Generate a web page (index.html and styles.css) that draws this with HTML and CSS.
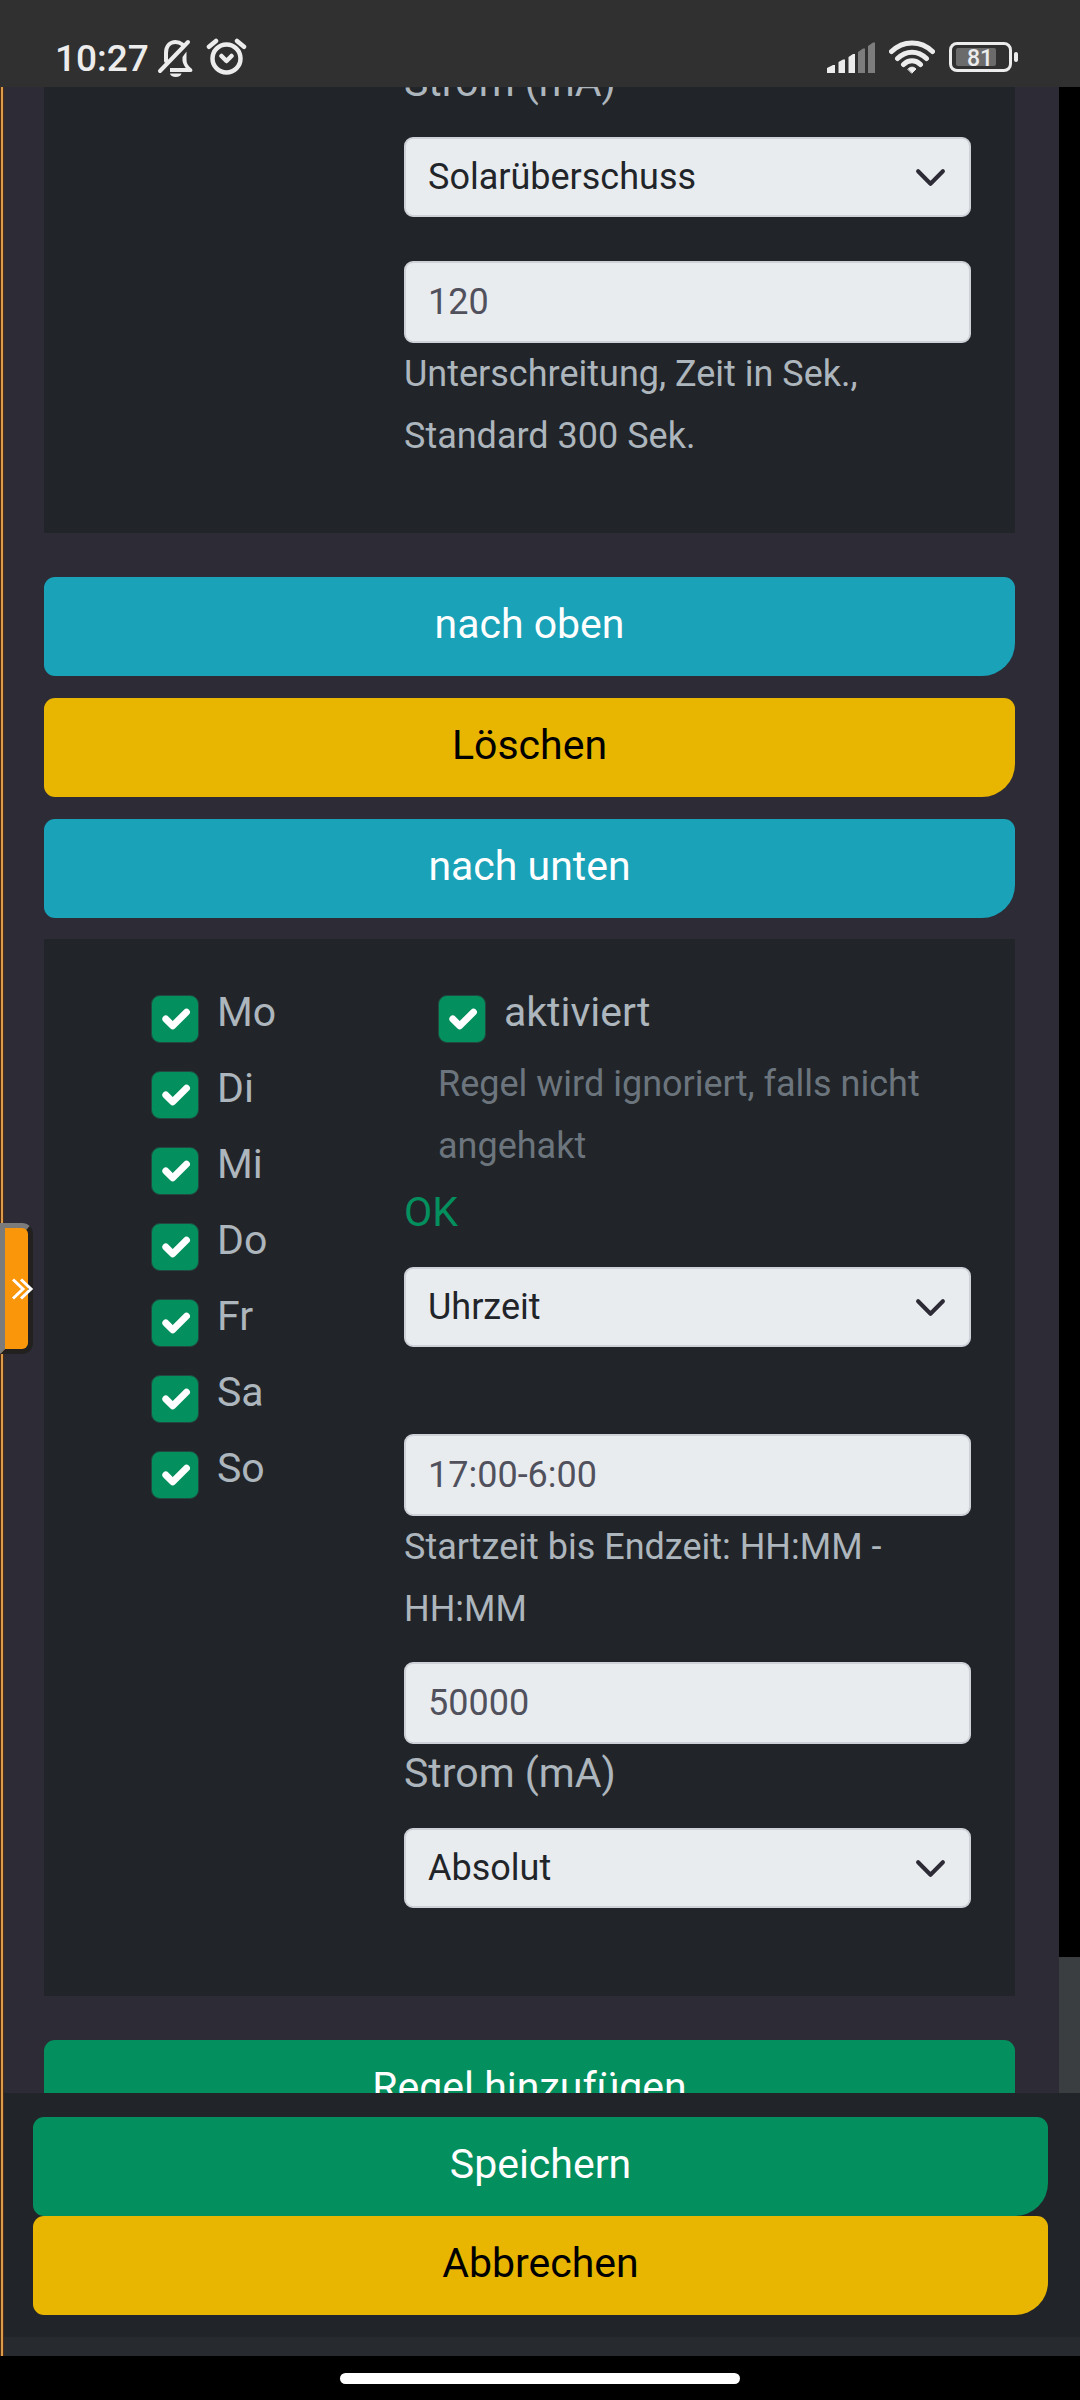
FILE: index.html
```html
<!DOCTYPE html>
<html lang="de">
<head>
<meta charset="utf-8">
<meta name="viewport" content="width=device-width, initial-scale=1">
<title>Regeln</title>
<link rel="stylesheet" href="styles.css">
</head>
<body>
<header class="status">
  <div class="status-group status-left">
    <span class="clock">10:27</span>
    <svg width="38" height="40" viewBox="0 0 38 40" fill="none" stroke="#ececec" stroke-width="4" stroke-linecap="round" aria-hidden="true">
      <path d="M9 23V15C9 8 13 4 18.500 4C21.500 4 23.500 5 25.500 6.500"/>
      <path d="M3 33L31 4"/>
      <path d="M13 32H33.500" stroke-linecap="butt"/>
      <path d="M25.500 19L29.500 13.500V22C29.500 26 31.500 28 34.500 30.500C36.500 32.500 35 34 33.500 34L31 33C28 29 26 26 25.500 23Z" fill="#ececec" stroke="none"/>
      <path d="M13 35.500H24.500A5.800 4 0 0 1 13 35.500Z" fill="#ececec" stroke="none"/>
    </svg>
    <svg class="alarm" width="41" height="40" viewBox="0 0 41 40" fill="none" stroke="#ececec" stroke-width="4.500" stroke-linecap="round" stroke-linejoin="round" aria-hidden="true">
      <circle cx="20.500" cy="20.500" r="14"/>
      <path d="M3 8.800L10 3M38 8.800L31 3M15.500 18L20.500 23L25.500 18"/>
    </svg>
  </div>
  <div class="status-group status-right">
    <svg width="48" height="40" viewBox="0 0 48 40" fill="#ececec" aria-hidden="true">
      <path d="M0 30L6 27H8V35H0ZM11.500 24L16 21.500H18V35H11.500ZM21.500 19L26 16H28V35H21.500Z"/>
      <path d="M31 14L36 10.500H38V35H31ZM41 8L46 4.500H48V35H41Z" fill="#7d7d7d"/>
    </svg>
    <svg width="46" height="40" viewBox="0 0 46 40" fill="none" stroke="#ececec" stroke-width="5" stroke-linecap="round" aria-hidden="true">
      <path d="M2.500 13.500C14 2 32 2 43.500 13.500M8.500 20.500C17 12 29 12 37.500 20.500M14.500 26.500C19.500 21.500 26.500 21.500 31.500 26.500"/>
      <path d="M19 31C21 28.500 25 28.500 27 31L23 35Z" fill="#ececec" stroke-width="1"/>
    </svg>
    <svg width="70" height="40" viewBox="0 0 70 40" role="img" aria-label="Akku 81 Prozent">
      <rect x="1.500" y="5.500" width="60" height="27" rx="6.500" fill="none" stroke="#ececec" stroke-width="3"/>
      <rect x="7" y="10" width="40" height="18" rx="2" fill="#6b6b6b"/>
      <rect x="65" y="14" width="4" height="10" rx="2" fill="#ececec"/>
      <text class="battery-text" x="31" y="28" text-anchor="middle">81</text>
    </svg>
  </div>
</header>

<div class="page">
  <main class="viewport">
    <form class="rules" id="rules">
      <section class="card">
        <div class="settings">
          <label class="caption" for="mode-1">Strom (mA)</label>
          <select class="control select" id="mode-1"><option>Solarüberschuss</option></select>
          <div class="field">
            <input class="control" id="delay" type="text" value="120">
            <label class="help" for="delay">Unterschreitung, Zeit in Sek., Standard 300 Sek.</label>
          </div>
        </div>
      </section>

      <div class="actions">
        <button class="btn btn-info" type="button">nach oben</button>
        <button class="btn btn-warning" type="button">Löschen</button>
        <button class="btn btn-info" type="button">nach unten</button>
      </div>

      <section class="card card-full">
        <div class="days">
          <label class="check"><input type="checkbox" checked>Mo</label>
          <label class="check"><input type="checkbox" checked>Di</label>
          <label class="check"><input type="checkbox" checked>Mi</label>
          <label class="check"><input type="checkbox" checked>Do</label>
          <label class="check"><input type="checkbox" checked>Fr</label>
          <label class="check"><input type="checkbox" checked>Sa</label>
          <label class="check"><input type="checkbox" checked>So</label>
        </div>
        <div class="settings">
          <div class="enable">
            <label class="check"><input type="checkbox" checked aria-describedby="enable-help">aktiviert</label>
            <p class="help muted" id="enable-help">Regel wird ignoriert, falls nicht angehakt</p>
          </div>
          <p class="state">OK</p>
          <select class="control select select-wide" aria-label="Bedingung"><option>Uhrzeit</option></select>
          <div class="field">
            <input class="control" id="time" type="text" value="17:00-6:00">
            <label class="help" for="time">Startzeit bis Endzeit: HH:MM - HH:MM</label>
          </div>
          <input class="control" id="current" type="text" value="50000">
          <label class="caption" for="current">Strom (mA)</label>
          <select class="control select" aria-label="Modus"><option>Absolut</option></select>
        </div>
      </section>

      <button class="btn btn-success add" type="button">Regel hinzufügen</button>
    </form>
    <div class="rail"><div class="thumb"></div></div>
  </main>

  <footer class="footer">
    <button class="btn btn-success" type="submit" form="rules">Speichern</button>
    <button class="btn btn-warning" type="button">Abbrechen</button>
  </footer>

  <button class="drawer" type="button" aria-label="Menü öffnen">
    <svg width="22" height="22" viewBox="0 0 22 22" fill="none" stroke="#fff" stroke-width="3" aria-hidden="true">
      <path d="M1 1.500L11 11L1 20.500M9 1.500L19 11L9 20.500"/>
    </svg>
  </button>
</div>

<nav class="gesture"><span class="pill"></span></nav>
</body>
</html>
```
FILE: styles.css
```css
*,
*::before {
  box-sizing: border-box;
}

body {
  margin: 0;
  height: 100vh;
  display: flex;
  flex-direction: column;
  background: #000;
  color: #adb5bd;
  font-family: Roboto, "Liberation Sans", sans-serif;
  font-size: 41px;
  line-height: 70px;
}

p {
  margin: 0;
}

button,
input,
select {
  margin: 0;
  font-family: inherit;
}

/* Status bar */
.status {
  flex: none;
  display: flex;
  justify-content: space-between;
  height: 87px;
  padding: 38px 61px 0 55px;
  background: #303030;
}

.status-group {
  display: flex;
}

.status-left {
  gap: 8px;
}

.status-left .alarm {
  margin-left: 3px;
}

.status-right {
  gap: 14px;
}

.clock {
  color: #ececec;
  font-size: 37px;
  font-weight: 500;
  line-height: 42px;
}

.battery-text {
  fill: #ececec;
  font-size: 23px;
  font-weight: 500;
}

/* Page frame with the orange edge line */
.page {
  position: relative;
  flex: 1;
  min-height: 0;
  display: flex;
  flex-direction: column;
}

.page::before {
  content: "";
  position: absolute;
  top: 0;
  bottom: 0;
  left: 0;
  width: 4px;
  background: #dc9a4c;
  border: solid #4a2c12;
  border-width: 0 1px;
}

.viewport {
  flex: 1;
  min-height: 0;
  display: flex;
  overflow: hidden;
  background: #2c2b36;
}

.rules {
  flex: 1;
  margin-top: -34px;
  padding: 0 44px;
}

.rail {
  display: flex;
  flex-direction: column;
  justify-content: flex-end;
  width: 21px;
  background: #000;
}

.thumb {
  height: 136px;
  background: #3a3e41;
}

/* Rule cards */
.card {
  display: grid;
  grid-template-columns: 360px 1fr;
  padding: 0 44px 44px 0;
  background: #212529;
}

.card-full {
  padding-top: 38px;
}

.settings {
  grid-column: 2;
  display: flex;
  flex-direction: column;
}

.days {
  padding-left: 107px;
}

.enable {
  padding-left: 34px;
}

.check {
  display: flex;
  gap: 18px;
  height: 76px;
}

.check input {
  appearance: none;
  flex: none;
  width: 48px;
  height: 48px;
  margin-top: 18px;
  border: 1px solid #22483f;
  border-radius: 9px;
  background: #048f5e url("data:image/svg+xml,%3Csvg xmlns='http://www.w3.org/2000/svg' viewBox='0 0 20 20'%3E%3Cpath fill='none' stroke='%23fff' stroke-linecap='round' stroke-linejoin='round' stroke-width='3' d='M6 10l3 3l6-6'/%3E%3C/svg%3E") center / contain no-repeat;
}

.control {
  width: 100%;
  height: 82px;
  padding: 0 22px;
  border: 2px solid #ced1d8;
  border-radius: 9px;
  background: #e9ecef;
  color: #51515d;
  font-size: 36px;
}

.select {
  appearance: none;
  height: 80px;
  margin-bottom: 44px;
  background: #e9ecef url("data:image/svg+xml,%3Csvg xmlns='http://www.w3.org/2000/svg' viewBox='0 0 16 16'%3E%3Cpath fill='none' stroke='%232c2b36' stroke-linecap='round' stroke-linejoin='round' stroke-width='2' d='M2 5l6 6 6-6'/%3E%3C/svg%3E") right 22px center / 33px 33px no-repeat;
  color: #212529;
}

.select-wide {
  margin-bottom: 87px;
}

.field {
  display: flex;
  flex-direction: column;
  margin-bottom: 22px;
}

.help {
  font-size: 36px;
  line-height: 62px;
}

.muted {
  color: #6c757d;
}

.caption {
  margin-bottom: 26px;
  line-height: 58px;
}

.state {
  margin-bottom: 20px;
  color: #048f5e;
}

/* Buttons */
.btn {
  display: block;
  width: 100%;
  height: 99px;
  padding: 0 0 6px;
  border: 0;
  border-radius: 11px 11px 33px 11px;
  color: #fff;
  font-size: 41px;
}

.btn-info {
  background: #19a2b8;
}

.btn-warning {
  background: #e8b500;
  color: #000;
}

.btn-success {
  background: #048f5e;
}

.actions {
  display: flex;
  flex-direction: column;
  gap: 22px;
  padding: 44px 0 21px;
}

.add {
  margin-top: 44px;
}

.footer {
  flex: none;
  padding: 24px 32px 22px 33px;
  border-bottom: 19px solid #272b2f;
  background: #212529;
}

/* Side drawer handle */
.drawer {
  position: absolute;
  top: 1136px;
  left: 0;
  display: flex;
  align-items: center;
  width: 33px;
  height: 131px;
  padding: 0 0 0 7px;
  border: 5px solid;
  border-color: #7b7b7b #22211f #22211f #7b7b7b;
  border-radius: 0 11px 11px 0;
  background: #f99609;
}

.drawer svg {
  flex: none;
}

/* Gesture bar */
.gesture {
  flex: none;
  display: flex;
  align-items: center;
  justify-content: center;
  height: 44px;
  background: #000;
}

.pill {
  width: 37%;
  height: 11px;
  border-radius: 6px;
  background: #fff;
}
```
